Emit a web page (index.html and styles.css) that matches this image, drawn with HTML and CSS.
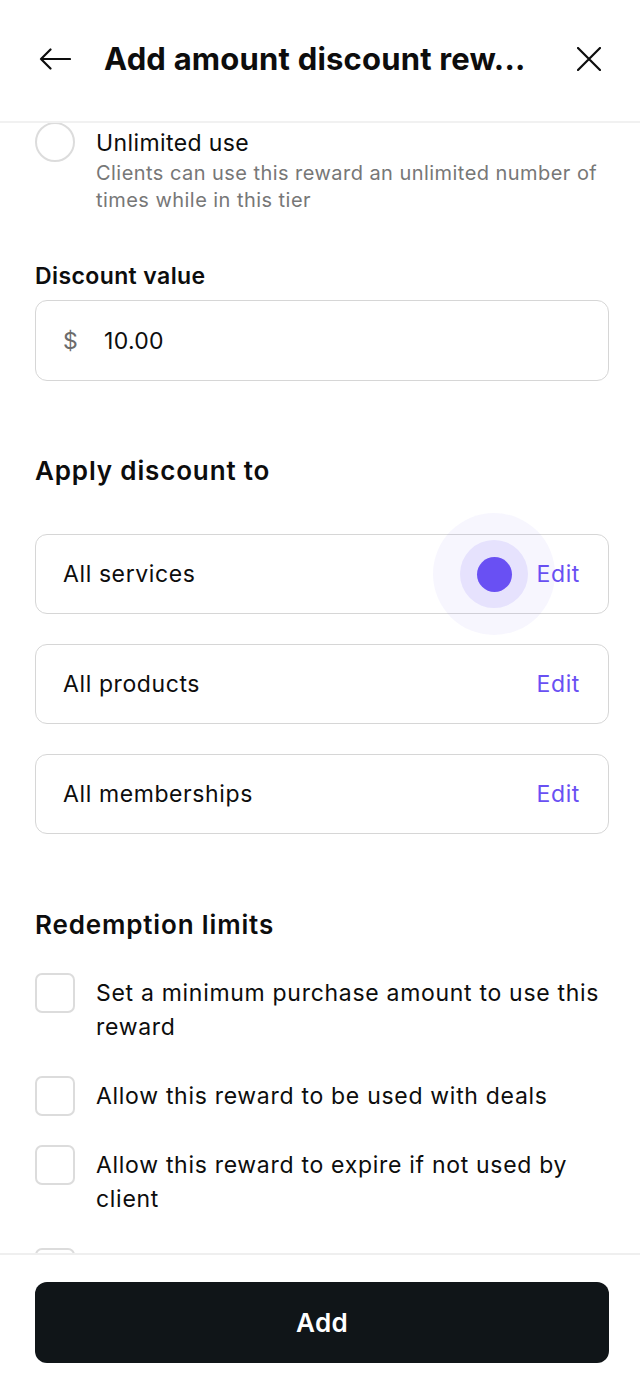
FILE: index.html
```html
<!DOCTYPE html>
<html>
<head>
<meta charset="utf-8">
<link rel="stylesheet" href="styles.css">
</head>
<body>
<div class="screen">
  <header class="header">
    <svg class="icon-back" viewBox="0 0 32 22" width="32" height="22"><path d="M31 11H2M11.5 1.5L2 11l9.5 9.5" fill="none" stroke="#0d0d0d" stroke-width="2.2" stroke-linecap="round" stroke-linejoin="round"/></svg>
    <h1 class="title">Add amount discount rew...</h1>
    <svg class="icon-close" viewBox="0 0 24 24" width="24" height="24"><path d="M1 1L23 23M23 1L1 23" fill="none" stroke="#0d0d0d" stroke-width="2.2" stroke-linecap="round"/></svg>
  </header>
  <main class="content">
    <div class="radio-row">
      <span class="radio"></span>
      <div class="radio-text">
        <div class="radio-title">Unlimited use</div>
        <div class="radio-desc">Clients can use this reward an unlimited number of times while in this tier</div>
      </div>
    </div>

    <div class="label">Discount value</div>
    <div class="input">
      <span class="currency">$</span>
      <span class="value">10.00</span>
    </div>

    <h2 class="section-title apply">Apply discount to</h2>
    <div class="cards">
      <div class="card">
        <span class="card-text">All services</span>
        <span class="edit">Edit</span>
        <span class="halo"><span class="halo-inner"><span class="dot"></span></span></span>
      </div>
      <div class="card">
        <span class="card-text">All products</span>
        <span class="edit">Edit</span>
      </div>
      <div class="card">
        <span class="card-text">All memberships</span>
        <span class="edit">Edit</span>
      </div>
    </div>

    <h2 class="section-title limits">Redemption limits</h2>
    <div class="checks">
      <div class="check-row"><span class="checkbox"></span><span class="check-text">Set a minimum purchase amount to use this reward</span></div>
      <div class="check-row"><span class="checkbox"></span><span class="check-text">Allow this reward to be used with deals</span></div>
      <div class="check-row"><span class="checkbox"></span><span class="check-text">Allow this reward to expire if not used by client</span></div>
      <div class="check-row"><span class="checkbox"></span></div>
    </div>
  </main>
  <footer class="footer">
    <button class="add-btn">Add</button>
  </footer>
</div>
</body>
</html>
```

FILE: styles.css
```css
* { box-sizing: border-box; }
html, body { margin: 0; padding: 0; background: #fff; }
body {
  font-family: Inter, "Noto Sans", "Liberation Sans", sans-serif;
  color: #0d0d0d;
}
.screen {
  width: 640px;
  height: 1386px;
  display: flex;
  flex-direction: column;
  overflow: hidden;
}
.header {
  flex: 0 0 123px;
  display: flex;
  align-items: center;
  padding: 0 39px 4px 39px;
  border-bottom: 2px solid #f1f1f1;
}
.icon-back { flex: 0 0 auto; }
.title {
  margin: 0 0 0 33px;
  flex: 1 1 auto;
  font-size: 31px;
  font-weight: 700;
  letter-spacing: 0.2px;
  white-space: nowrap;
}
.icon-close { flex: 0 0 auto; }

.content {
  flex: 1 1 auto;
  overflow: hidden;
  padding: 0 31px 0 35px;
}
.radio-row {
  display: flex;
  gap: 21px;
  margin-top: -1px;
}
.radio {
  flex: 0 0 40px;
  height: 40px;
  border: 2px solid #dcdcdc;
  border-radius: 50%;
}
.radio-text { padding-top: 6px; }
.radio-title { font-size: 23px; line-height: 30px; letter-spacing: 0.4px; }
.radio-desc {
  margin-top: 2px;
  font-size: 20px;
  line-height: 27px;
  letter-spacing: 0.45px;
  color: #777;
}
.label {
  margin-top: 48px;
  font-size: 23px;
  line-height: 28px;
  font-weight: 600;
  letter-spacing: 0.4px;
}
.input {
  margin-top: 10px;
  height: 81px;
  border: 1.5px solid #d6d6d6;
  border-radius: 12px;
  display: flex;
  align-items: center;
  padding-left: 27px;
  font-size: 23px;
  letter-spacing: 0.3px;
}
.currency { color: #6b6b6b; width: 41px; }
.value { color: #0d0d0d; }

.section-title {
  margin: 0;
  font-size: 26px;
  line-height: 32px;
  font-weight: 600;
  letter-spacing: 0.85px;
}
.apply { margin-top: 74px; }
.cards {
  margin-top: 47px;
  display: flex;
  flex-direction: column;
  gap: 30px;
}
.card {
  position: relative;
  height: 80px;
  border: 1.5px solid #d6d6d6;
  border-radius: 12px;
  display: flex;
  align-items: center;
  justify-content: space-between;
  padding: 0 28px 0 27px;
  font-size: 23px;
  letter-spacing: 0.6px;
}
.edit { color: #6950f3; }
.halo {
  position: absolute;
  left: 397px;
  top: -22px;
  width: 122px;
  height: 122px;
  border-radius: 50%;
  background: rgba(105, 80, 243, 0.05);
  display: flex;
  align-items: center;
  justify-content: center;
  pointer-events: none;
}
.halo-inner {
  width: 68px;
  height: 68px;
  border-radius: 50%;
  background: rgba(105, 80, 243, 0.12);
  display: flex;
  align-items: center;
  justify-content: center;
}
.dot {
  width: 35px;
  height: 35px;
  border-radius: 50%;
  background: #6950f3;
}
.limits { margin-top: 75px; }
.checks {
  margin-top: 32px;
  display: flex;
  flex-direction: column;
  gap: 28px;
}
.check-row {
  display: flex;
  align-items: flex-start;
  gap: 21px;
}
.checkbox {
  flex: 0 0 40px;
  height: 40px;
  border: 2px solid #dcdcdc;
  border-radius: 7px;
}
.check-text {
  padding: 3px 0 4px;
  font-size: 23px;
  line-height: 34px;
  letter-spacing: 0.7px;
}
.footer {
  flex: 0 0 133px;
  border-top: 2px solid #efefef;
  padding: 27px 31px 0 35px;
}
.add-btn {
  width: 100%;
  height: 81px;
  border: none;
  border-radius: 12px;
  background: #101518;
  color: #fff;
  font-family: Inter, "Noto Sans", sans-serif;
  font-size: 26px;
  font-weight: 600;
  letter-spacing: 0.3px;
}
```
